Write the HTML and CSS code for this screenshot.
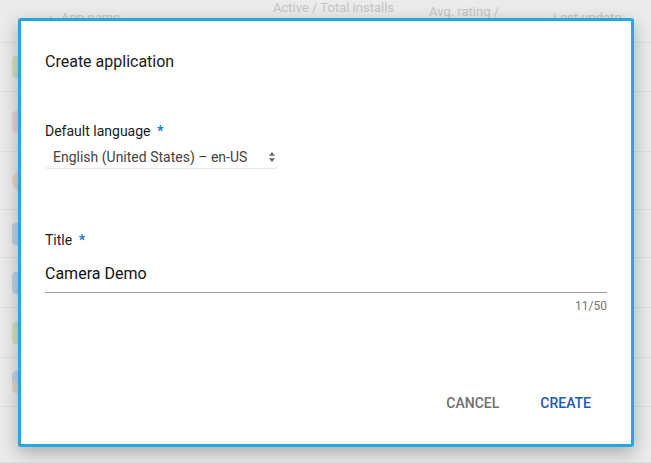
FILE: index.html
```html
<!DOCTYPE html>
<html>
<head>
<meta charset="utf-8">
<link rel="stylesheet" href="styles.css">
</head>
<body>
<div class="page">
  <div class="thead">
    <div class="th th-name"><span class="sort">&#9650;</span>App name</div>
    <div class="th th-installs">Active / Total installs</div>
    <div class="th th-rating">Avg. rating /</div>
    <div class="th th-update">Last update</div>
  </div>
  <div class="row r1"><span class="ico green"></span></div>
  <div class="row r2"><span class="ico pink"></span></div>
  <div class="row r3"><span class="ico orange"></span></div>
  <div class="row r4"><span class="ico blue"></span></div>
  <div class="row r5"><span class="ico blue"></span></div>
  <div class="row r6"><span class="ico green"></span></div>
  <div class="row r7"><span class="ico mixed"></span></div>
  <div class="row r8"></div>
</div>

<div class="dialog">
  <h1 class="dialog-title">Create application</h1>
  <div class="field">
    <label class="label">Default language <span class="req">*</span></label>
    <div class="select">
      <span class="select-text">English (United States) – en-US</span>
      <svg class="arrows" width="6" height="10" viewBox="0 0 6 10"><path d="M3 0 L6 3.8 L0 3.8 Z M0 6.2 L6 6.2 L3 10 Z" fill="#666"/></svg>
    </div>
  </div>
  <div class="field field-title">
    <label class="label">Title <span class="req">*</span></label>
    <div class="input">Camera Demo</div>
    <div class="counter">11/50</div>
  </div>
  <div class="actions">
    <button class="btn btn-cancel">CANCEL</button>
    <button class="btn btn-create">CREATE</button>
  </div>
</div>
</body>
</html>
```

FILE: styles.css
```css
html, body {
  margin: 0;
  padding: 0;
  width: 651px;
  height: 463px;
  overflow: hidden;
  font-family: Roboto, "Liberation Sans", sans-serif;
}
.page {
  background: #ebebeb;
  height: 463px;
}
.thead {
  height: 43px;
  border-bottom: 1px solid #dedede;
  box-sizing: border-box;
  position: relative;
  color: #c4c4c4;
  font-size: 13px;
}
.th {
  position: absolute;
  white-space: nowrap;
  line-height: 15px;
}
.th-name { left: 47px; top: 10px; }
.sort { font-size: 7px; margin-right: 7px; vertical-align: 2px; }
.th-installs { left: 273px; top: 0; }
.th-rating { left: 429px; top: 4px; }
.th-update { left: 553px; top: 10px; }
.row {
  border-bottom: 1px solid #dedede;
  box-sizing: border-box;
  display: flex;
  align-items: center;
  padding-left: 12px;
}
.r1 { height: 49px; }
.r2 { height: 60px; }
.r3 { height: 58px; }
.r4 { height: 48px; }
.r5 { height: 50px; }
.r6 { height: 50px; }
.r7 { height: 49px; }
.r8 { height: 56px; }
.ico {
  width: 22px;
  height: 22px;
  border-radius: 4px;
  display: block;
}
.green { background: #d3e2bd; }
.pink { background: #e9d3d8; }
.orange { background: #ecd5c6; border-radius: 50%; }
.blue { background: #bfd2e2; }
.mixed { background: linear-gradient(#c9d4e0 50%, #e2d6c9 50%); }

.dialog {
  position: absolute;
  left: 18px;
  top: 18px;
  width: 616px;
  height: 429px;
  box-sizing: border-box;
  background: #fff;
  border: 3px solid #27a7df;
  border-radius: 3px;
  box-shadow: 0 6px 18px rgba(0,0,0,0.28);
  padding: 31px 24px 23px 24px;
  display: flex;
  flex-direction: column;
  color: #1a1a1a;
}
.dialog-title {
  margin: 0;
  font-size: 16px;
  font-weight: 400;
  line-height: 20px;
}
.field {
  margin-top: 50px;
  display: flex;
  flex-direction: column;
}
.label {
  font-size: 14px;
  line-height: 18px;
  color: #1a1a1a;
}
.req {
  color: #1a73c9;
  font-weight: 700;
  margin-left: 3px;
}
.select {
  margin-top: 6px;
  width: 233px;
  height: 22px;
  box-sizing: border-box;
  padding: 0 3px 0 8px;
  display: flex;
  align-items: center;
  justify-content: space-between;
  border-radius: 4px;
  box-shadow: 0 1px 1px rgba(0,0,0,0.12);
  font-size: 14px;
  color: #4a4040;
}
.arrows { display: block; }
.field-title { margin-top: 63px; }
.input {
  margin-top: 13px;
  font-size: 16px;
  line-height: 24px;
  padding-bottom: 6px;
  border-bottom: 1px solid #9e9e9e;
  color: #111;
}
.counter {
  margin-top: 6px;
  text-align: right;
  font-size: 12px;
  line-height: 14px;
  color: #757575;
}
.actions {
  margin-top: auto;
  display: flex;
  justify-content: flex-end;
  gap: 25px;
  padding-right: 8px;
}
.btn {
  font-family: Roboto, "Liberation Sans", sans-serif;
  background: none;
  border: none;
  padding: 0 8px;
  height: 36px;
  font-size: 14px;
  font-weight: 500;
}
.btn-cancel { color: #6f6f6f; }
.btn-create { color: #1c5cab; }
```
